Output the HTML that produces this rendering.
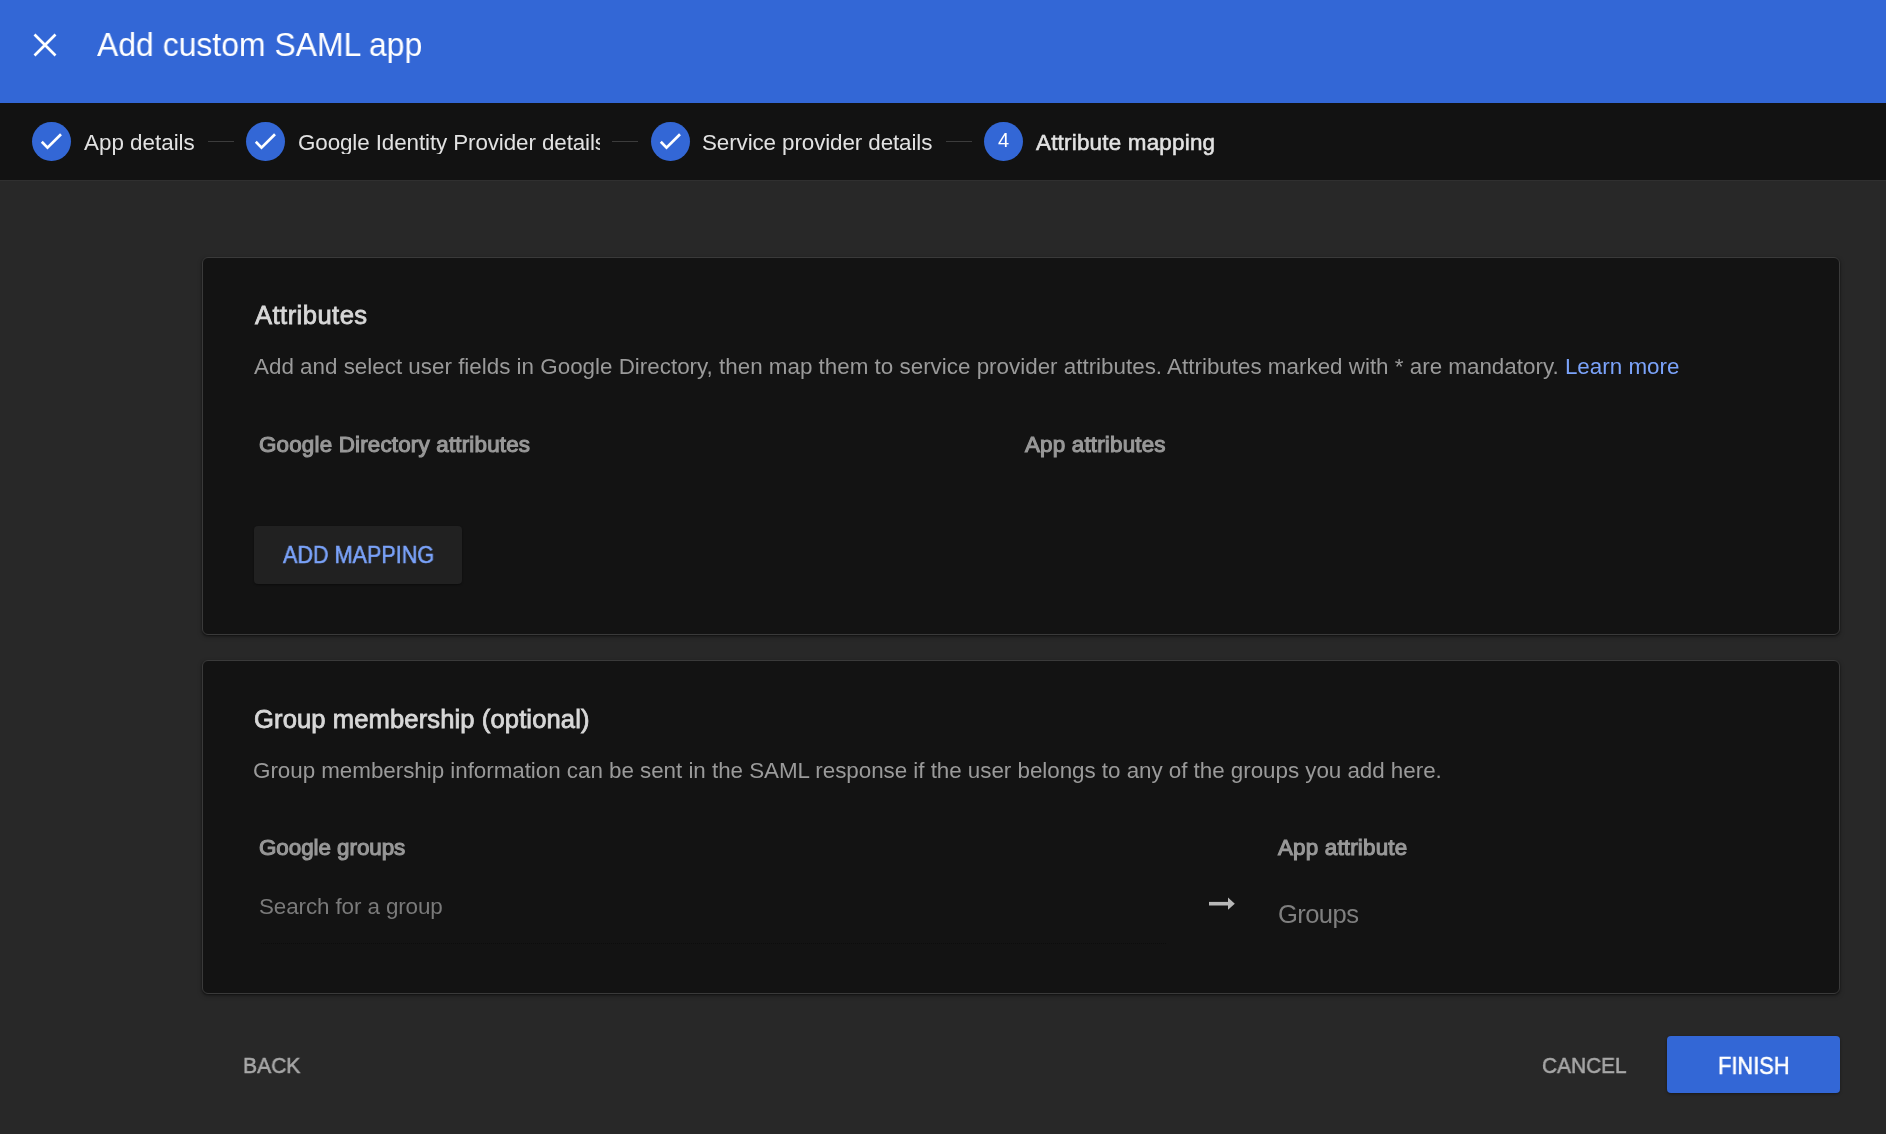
<!DOCTYPE html>
<html><head><meta charset="utf-8">
<style>
*{box-sizing:border-box;margin:0;padding:0}
html,body{width:1886px;height:1134px;overflow:hidden;background:#282828;font-family:"Liberation Sans",sans-serif}
.a{position:absolute;white-space:nowrap;line-height:1;transform-origin:0 0;will-change:transform}
#hdr{position:absolute;left:0;top:0;width:1886px;height:103px;background:#3367d6}
#ln{position:absolute;left:0;top:180px;width:1886px;height:1px;background:#303030}
#stp{position:absolute;left:0;top:103px;width:1886px;height:77px;background:#121212}
.circ{position:absolute;top:122px;width:38.5px;height:39px;border-radius:50%;background:#3367d6}
.sline{position:absolute;top:141px;height:1px;background:#3c3c3c}
.slab{position:absolute;font-size:22.4px;color:#e2e2e2;line-height:1;white-space:nowrap;will-change:transform}
.card{position:absolute;left:202px;width:1638px;background:#131313;border:1px solid #3a3a3a;border-radius:6px;box-shadow:0 1px 2px rgba(0,0,0,.45),0 2px 5px rgba(0,0,0,.25)}
.m{-webkit-text-stroke:0.55px currentColor}
.h{font-size:25.6px;color:#d8d8d8;letter-spacing:0.1px;-webkit-text-stroke:0.8px #d8d8d8 !important}
.h1{letter-spacing:0.45px}
.p{font-size:22.4px;color:#9a9a9a}
.b{font-size:22.4px;color:#989898;letter-spacing:0.18px;-webkit-text-stroke:1.1px #989898 !important}
</style></head><body>
<div id="hdr"></div>
<svg class="a" style="left:33px;top:33px" width="24" height="24" viewBox="0 0 24 24"><path d="M1.5 1.5L22.5 22.5M22.5 1.5L1.5 22.5" stroke="#fff" stroke-width="2.7"/></svg>
<div class="a" style="left:97px;top:28px;font-size:33px;color:#fff;transform:scaleX(0.967)">Add custom SAML app</div>

<div id="stp"></div><div id="ln"></div>
<div class="circ" style="left:32px"></div>
<svg class="a" style="left:32px;top:122px" width="39" height="39" viewBox="0 0 39 39"><path d="M9.8 19.8L15.5 25.6L29 12.2" stroke="#fff" stroke-width="2.7" fill="none"/></svg>
<div class="slab" style="left:84px;top:132px">App details</div>
<div class="sline" style="left:208px;width:26px"></div>
<div class="circ" style="left:246px"></div>
<svg class="a" style="left:246px;top:122px" width="39" height="39" viewBox="0 0 39 39"><path d="M9.8 19.8L15.5 25.6L29 12.2" stroke="#fff" stroke-width="2.7" fill="none"/></svg>
<div class="slab" style="left:298px;top:132px;width:302px;overflow:hidden;letter-spacing:-0.1px">Google Identity Provider details</div>
<div class="sline" style="left:612px;width:26px"></div>
<div class="circ" style="left:651px"></div>
<svg class="a" style="left:651px;top:122px" width="39" height="39" viewBox="0 0 39 39"><path d="M9.8 19.8L15.5 25.6L29 12.2" stroke="#fff" stroke-width="2.7" fill="none"/></svg>
<div class="slab" style="left:701.5px;top:132px;letter-spacing:-0.1px">Service provider details</div>
<div class="sline" style="left:946px;width:26px"></div>
<div class="circ" style="left:984px"></div>
<div class="slab" style="left:984px;top:130px;width:39px;text-align:center;color:#fff;font-size:20px">4</div>
<div class="slab m" style="left:1036px;top:132px;letter-spacing:0.22px">Attribute mapping</div>

<div class="card" style="top:257px;height:378px"></div>
<div class="a h m h1" style="left:254.5px;top:303px">Attributes</div>
<div class="a p" style="left:254px;top:356px">Add and select user fields in Google Directory, then map them to service provider attributes. Attributes marked with * are mandatory. <span style="color:#7ba3fa">Learn more</span></div>
<div class="a b m" style="left:259px;top:434px">Google Directory attributes</div>
<div class="a b m" style="left:1024.5px;top:434px">App attributes</div>
<div class="a" style="left:254px;top:526px;width:208px;height:58px;background:#212121;border-radius:4px;box-shadow:0 1px 2px rgba(0,0,0,.4)"></div>
<div class="a m" style="left:283px;top:543px;font-size:24px;color:#7ba3fa;transform:scaleX(0.9)">ADD MAPPING</div>

<div class="card" style="top:660px;height:334px"></div>
<div class="a h m" style="left:254px;top:707px">Group membership (optional)</div>
<div class="a p" style="left:253px;top:760px;letter-spacing:-0.035px">Group membership information can be sent in the SAML response if the user belongs to any of the groups you add here.</div>
<div class="a b m" style="left:258.5px;top:837px;letter-spacing:-0.05px">Google groups</div>
<div class="a b m" style="left:1278px;top:837px">App attribute</div>
<div class="a" style="left:259px;top:896px;font-size:22.4px;color:#7a7a7a;letter-spacing:-0.1px">Search for a group</div>
<div style="position:absolute;left:261px;top:943px;width:905px;height:1px;background:repeating-linear-gradient(90deg,#0c0c0c 0 1px,transparent 1px 2px)"></div>
<svg class="a" style="left:1208px;top:896px" width="28" height="16" viewBox="0 0 28 16"><path d="M1 7.7H21" stroke="#b8b8b8" stroke-width="3.6"/><path d="M20 1.6L26.8 7.7L20 13.8Z" fill="#b8b8b8"/></svg>
<div class="a" style="left:1278px;top:902px;font-size:25.6px;color:#7f7f7f;letter-spacing:-0.6px">Groups</div>

<div class="a m" style="left:243px;top:1054px;font-size:22.8px;color:#a8a8a8;transform:scaleX(0.925)">BACK</div>
<div class="a m" style="left:1542px;top:1054px;font-size:22.8px;color:#a8a8a8;transform:scaleX(0.915)">CANCEL</div>
<div class="a" style="left:1667px;top:1036px;width:173px;height:57px;background:#3367d6;border-radius:4px;box-shadow:0 1px 3px rgba(0,0,0,.4)"></div>
<div class="a m" style="left:1718px;top:1054px;font-size:24px;color:#fff;transform:scaleX(0.91)">FINISH</div>
</body></html>
